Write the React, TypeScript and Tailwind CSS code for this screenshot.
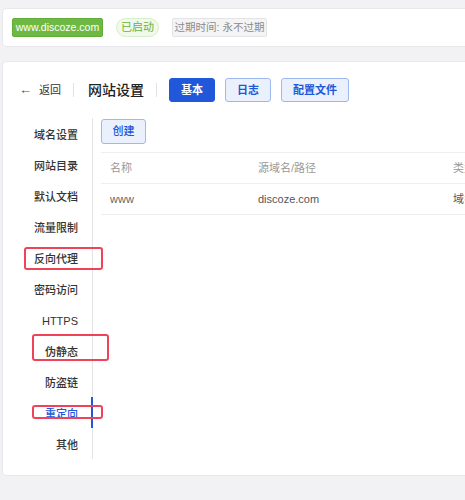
import { useState } from 'react';

const menu = ['域名设置', '网站目录', '默认文档', '流量限制', '反向代理', '密码访问', 'HTTPS', '伪静态', '防盗链', '重定向', '其他'];

export default function App() {
    const [tab, setTab] = useState('基本');
    const [active, setActive] = useState('重定向');
    const font = { fontFamily: '"Liberation Sans", "Noto Sans CJK SC", sans-serif' };

    return (
        <div className="relative w-[465px] h-[500px] overflow-hidden bg-[#f2f2f4] pt-2 pl-[2px]" style={font}>
            {/* Site status bar */}
            <div className="w-[500px] h-[39px] bg-white rounded-[4px] border border-[#e8e8ec] flex items-center pl-[9px] gap-[13px]">
                <span className="h-[19px] w-[91px] flex items-center justify-center bg-[#6db944] border border-[#62ad3a] rounded-[2px] text-white text-[10.5px] whitespace-nowrap">
                    www.discoze.com
                </span>
                <span className="h-[19px] w-[43px] flex items-center justify-center bg-[#f0f9eb] border border-[#d6eec9] rounded-full text-[#67b33f] text-[11px] whitespace-nowrap">
                    已启动
                </span>
                <span className="h-[19px] w-[95px] flex items-center justify-center bg-[#f4f4f5] border border-[#e4e4e7] rounded-[2px] text-[#8a8a8f] text-[10.5px] whitespace-nowrap">
                    过期时间: 永不过期
                </span>
            </div>

            {/* Settings card */}
            <div className="mt-[14px] w-[500px] h-[415px] bg-white rounded-[4px] border border-[#e8e8ec] pt-[16px]">
                <div className="flex items-center h-[24px]">
                    <div className="flex items-center pl-[16px] text-[11px] text-[#333]">
                        <span className="text-[13px] text-[#555] w-[20px]">←</span>
                        <span>返回</span>
                    </div>
                    <div className="w-px h-[14px] bg-[#e2e2e6] ml-[12px]" />
                    <span className="ml-[14px] text-[14px] font-medium text-[#222]">网站设置</span>
                    <div className="w-px h-[14px] bg-[#e2e2e6] ml-[12px]" />
                    <div className="flex gap-[10px] ml-[12px]">
                        {['基本', '日志', '配置文件'].map((t) => (
                            <button
                                key={t}
                                onClick={() => setTab(t)}
                                className={
                                    'h-[24px] px-[11px] rounded-[3px] border text-[11px] font-bold ' +
                                    (tab === t
                                        ? 'bg-[#2157d9] border-[#2157d9] text-white'
                                        : 'bg-[#eaf0fc] border-[#9db9f0] text-[#2157d9]')
                                }
                            >
                                {t}
                            </button>
                        ))}
                    </div>
                </div>

                <div className="flex mt-[16px]">
                    {/* Side menu */}
                    <div className="relative w-[90px] border-r border-[#e3e4e8]">
                        {menu.map((m) => (
                            <div
                                key={m}
                                onClick={() => setActive(m)}
                                className={
                                    'relative h-[31px] flex items-center justify-end pr-[14px] pt-[3px] text-[11px] font-medium cursor-pointer ' +
                                    (active === m ? 'text-[#2157d9]' : 'text-[#333]')
                                }
                            >
                                {m}
                                {active === m && <div className="absolute right-[-1px] top-0 w-[2px] h-[31px] bg-[#2157d9]" />}
                            </div>
                        ))}
                    </div>

                    {/* Content */}
                    <div className="flex-1 pl-[8px]">
                        <button className="h-[25px] w-[45px] rounded-[3px] bg-[#eaf0fc] border border-[#9db9f0] text-[#2157d9] text-[11px] font-medium">
                            创建
                        </button>
                        <div className="mt-[8px] border-t border-[#eceef2] text-[11px]">
                            <div className="flex h-[31px] items-center border-b border-[#eceef2] text-[#999]">
                                <span className="w-[157px] pl-[9px]">名称</span>
                                <span className="w-[195px]">源域名/路径</span>
                                <span>类型</span>
                            </div>
                            <div className="flex h-[31px] items-center border-b border-[#eceef2] text-[#555]">
                                <span className="w-[157px] pl-[9px] text-[#666]">www</span>
                                <span className="w-[195px]">discoze.com</span>
                                <span>域名</span>
                            </div>
                        </div>
                    </div>
                </div>
            </div>

            {/* Annotation boxes */}
            <div className="absolute left-[24px] top-[247px] w-[79px] h-[23px] border-2 border-[#f0435a] rounded-[3px] pointer-events-none" />
            <div className="absolute left-[32px] top-[334px] w-[77px] h-[27px] border-2 border-[#f0435a] rounded-[3px] pointer-events-none" />
            <div className="absolute left-[32px] top-[405px] w-[71px] h-[14px] border-2 border-[#f0435a] rounded-[3px] pointer-events-none" />
        </div>
    );
}
